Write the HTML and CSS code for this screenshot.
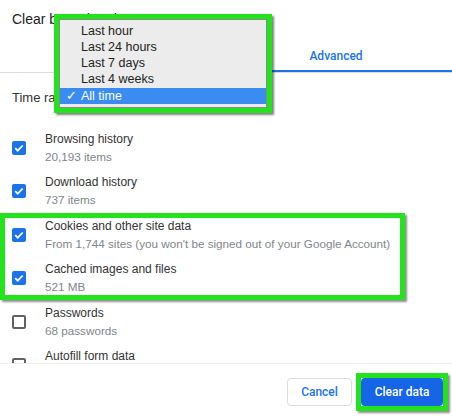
FILE: index.html
```html
<!DOCTYPE html>
<html lang="en">
<head>
<meta charset="utf-8">
<title>Clear browsing data</title>
<link rel="stylesheet" href="styles.css">
</head>
<body>
<div class="dialog">
  <div class="header">Clear browsing data</div>
  <div class="tabs">
    <div class="tab">Basic</div>
    <div class="tab active">Advanced</div>
  </div>
  <div class="time-row">Time range</div>
  <div class="list">
    <div class="row">
      <span class="cb checked"><svg viewBox="0 0 14 14"><path d="M3.2 7.2l2.5 2.5 5-5.2" /></svg></span>
      <div class="txt"><div class="t">Browsing history</div><div class="s">20,193 items</div></div>
    </div>
    <div class="row">
      <span class="cb checked"><svg viewBox="0 0 14 14"><path d="M3.2 7.2l2.5 2.5 5-5.2" /></svg></span>
      <div class="txt"><div class="t">Download history</div><div class="s">737 items</div></div>
    </div>
    <div class="highlight">
      <div class="row">
        <span class="cb checked"><svg viewBox="0 0 14 14"><path d="M3.2 7.2l2.5 2.5 5-5.2" /></svg></span>
        <div class="txt"><div class="t">Cookies and other site data</div><div class="s">From 1,744 sites (you won't be signed out of your Google Account)</div></div>
      </div>
      <div class="row">
        <span class="cb checked"><svg viewBox="0 0 14 14"><path d="M3.2 7.2l2.5 2.5 5-5.2" /></svg></span>
        <div class="txt"><div class="t">Cached images and files</div><div class="s">521 MB</div></div>
      </div>
    </div>
    <div class="row">
      <span class="cb"></span>
      <div class="txt"><div class="t">Passwords</div><div class="s">68 passwords</div></div>
    </div>
    <div class="row">
      <span class="cb"></span>
      <div class="txt"><div class="t">Autofill form data</div><div class="s">&nbsp;</div></div>
    </div>
  </div>
  <div class="footer">
    <button class="btn cancel">Cancel</button>
    <span class="btn-hl"><button class="btn primary">Clear data</button></span>
  </div>
</div>

<div class="dropdown">
  <div class="menu">
    <div class="item">Last hour</div>
    <div class="item">Last 24 hours</div>
    <div class="item">Last 7 days</div>
    <div class="item">Last 4 weeks</div>
    <div class="item selected"><span class="check">✓</span>All time</div>
  </div>
</div>
</body>
</html>
```

FILE: styles.css
```css
* { box-sizing: border-box; }
html, body { margin: 0; padding: 0; }
body {
  width: 452px;
  height: 418px;
  overflow: hidden;
  position: relative;
  background: #fff;
  font-family: "Liberation Sans", Arial, sans-serif;
  color: #333;
}
.dialog {
  display: flex;
  flex-direction: column;
  height: 418px;
}
.header {
  padding: 10px 12px 0;
  height: 38px;
  font-size: 14px;
  line-height: 18px;
  color: #222;
}
.tabs {
  display: flex;
  height: 35px;
  border-bottom: 1px solid #dadce0;
}
.tab {
  flex: 1;
  display: flex;
  align-items: center;
  justify-content: center;
  font-family: Roboto, "Liberation Sans", sans-serif;
  font-weight: 500;
  font-size: 12px;
  color: #5f6368;
  padding-top: 2px;
}
.tab.active {
  color: #1a73e8;
  box-shadow: inset 0 -2px 0 #1a73e8;
  padding-right: 4px;
}
.time-row {
  height: 48px;
  display: flex;
  align-items: center;
  padding-left: 12px;
  font-size: 13px;
  color: #333;
}
.list {
  flex: 1;
  overflow: hidden;
  padding-top: 5px;
}
.row {
  height: 43.5px;
  display: flex;
  align-items: center;
  padding-left: 12px;
  gap: 19px;
}
.cb {
  width: 14px;
  height: 14px;
  border-radius: 2px;
  border: 2px solid #5f6368;
  flex-shrink: 0;
  display: flex;
}
.cb.checked {
  border: none;
  background: #1a73e8;
}
.cb svg {
  width: 14px;
  height: 14px;
  fill: none;
  stroke: #fff;
  stroke-width: 1.8;
}
.txt {
  font-size: 12px;
  line-height: 18px;
}
.t { color: #333; }
.s { color: #80868b; font-size: 11.7px; }
.highlight {
  width: 405px;
  outline: 5px solid #22e31c;
  outline-offset: -5px;
  box-shadow: 2px 2px 2px rgba(0,0,0,0.45);
}
.footer {
  flex-shrink: 0;
  height: 55px;
  border-top: 1px solid #eceef0;
  display: flex;
  justify-content: flex-end;
  align-items: center;
  gap: 9px;
  padding: 1px 9px 0 0;
}
.btn {
  height: 28px;
  border-radius: 4px;
  font-family: Roboto, "Liberation Sans", sans-serif;
  font-weight: 500;
  font-size: 12px;
  padding: 0;
  cursor: pointer;
}
.cancel {
  width: 65px;
  background: #fff;
  border: 1px solid #dadce0;
  color: #1a73e8;
}
.btn-hl {
  display: flex;
  margin: -5px;
  border: 5px solid #22e31c;
  box-shadow: 2px 2px 2px rgba(0,0,0,0.45);
}
.primary {
  width: 82px;
  background: #1565e6;
  border: none;
  color: #fff;
}
.dropdown {
  position: absolute;
  left: 54px;
  top: 14px;
  width: 218px;
  height: 99px;
  border: 5px solid #22e31c;
  box-shadow: 2px 2px 2px rgba(0,0,0,0.5);
  background: #22e31c;
}
.menu {
  height: 100%;
  background: #ececec;
  border: 1px solid #8a8a8a;
  padding-top: 3px;
  font-family: "Liberation Sans", Arial, sans-serif;
  font-size: 12.5px;
  color: #222;
}
.item {
  height: 16px;
  line-height: 16px;
  padding-left: 21px;
  position: relative;
}
.item.selected {
  background: #3b8cf0;
  color: #fff;
  height: 16px;
  margin-top: 1px;
}
.check {
  position: absolute;
  left: 6px;
  top: 0;
}
```
